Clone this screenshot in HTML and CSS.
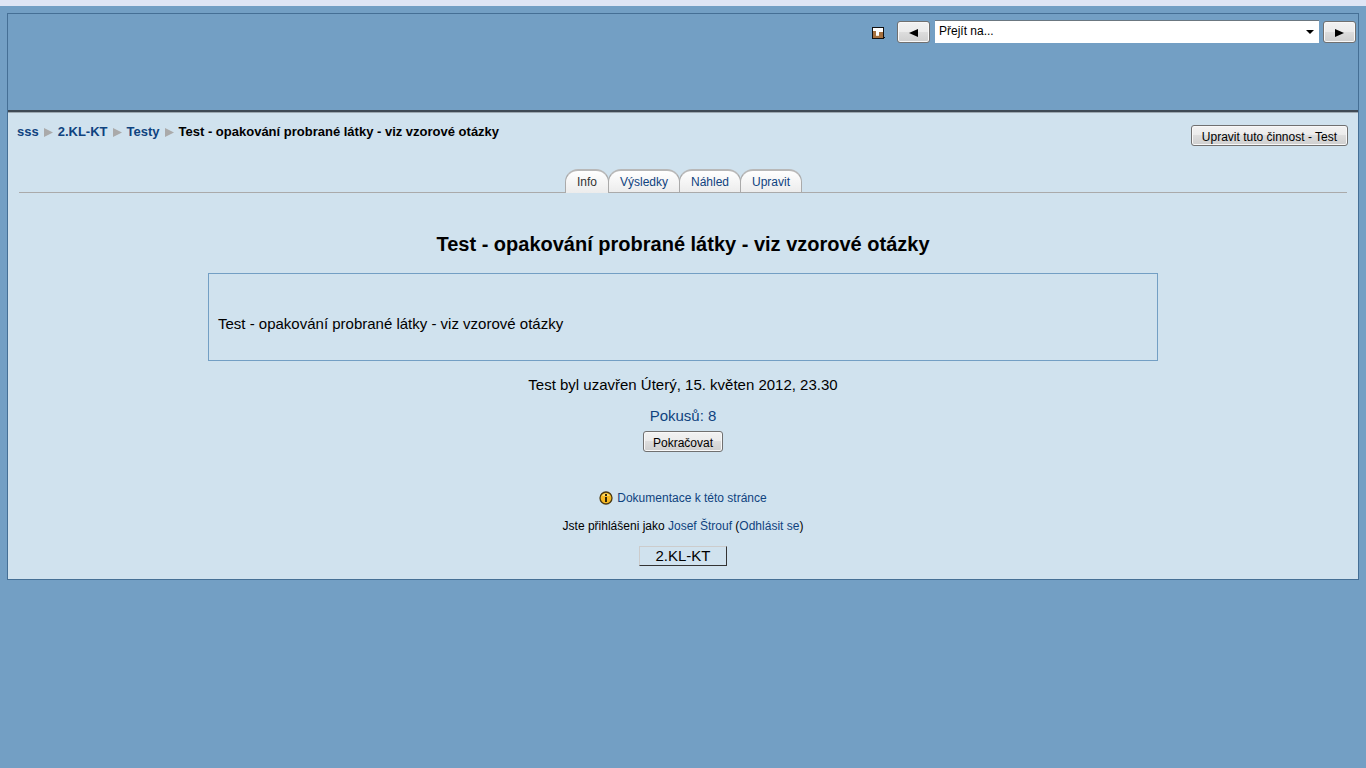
FILE: index.html
```html
<!DOCTYPE html>
<html lang="cs">
<head>
<meta charset="utf-8">
<title>Test - opakování probrané látky</title>
<link rel="stylesheet" href="styles.css">
</head>
<body>
<div class="page">
  <header class="header">
    <form class="jump">
      <a class="log-link" href="#" aria-label="Protokoly">
        <svg width="13" height="13" viewBox="0 0 13 13" shape-rendering="crispEdges">
          <path fill="#111" d="M0 0h12v12H0z"/>
          <path fill="#fff" d="M1 1h10v10H1z"/>
          <path fill="#a5703f" d="M1 4h3v7H1zM4 8h3v3H4zM7 5h4v6H7z"/>
          <path fill="#f3e6d2" d="M4 8h3v1H4z"/>
          <path fill="#111" d="M11 10h2v1h-1v1h-1z"/>
        </svg>
      </a>
      <button class="btn btn-arrow btn-prev" type="button" aria-label="Předchozí">
        <svg width="9" height="8" viewBox="0 0 9 8"><path d="M9 0v8L0 4z"/></svg>
      </button>
      <span class="select-wrap">
        <select class="select" aria-label="Přejít na"><option>Přejít na...</option></select>
        <svg class="caret" width="8" height="4" viewBox="0 0 8 4"><path d="M0 0h8L4 4z"/></svg>
      </span>
      <button class="btn btn-arrow" type="button" aria-label="Další">
        <svg width="9" height="8" viewBox="0 0 9 8"><path d="M0 0v8l9-4z"/></svg>
      </button>
    </form>
  </header>
  <div class="navbar">
    <nav class="crumbs">
      <a href="#">sss</a><svg class="sep" width="9" height="9" viewBox="0 0 9 9"><path d="M0 0v9l9-4.500z"/></svg>
      <a href="#">2.KL-KT</a><svg class="sep" width="9" height="9" viewBox="0 0 9 9"><path d="M0 0v9l9-4.500z"/></svg>
      <a href="#">Testy</a><svg class="sep" width="9" height="9" viewBox="0 0 9 9"><path d="M0 0v9l9-4.500z"/></svg>
      <span>Test - opakování probrané látky - viz vzorové otázky</span>
    </nav>
    <button class="btn btn-edit" type="button">Upravit tuto činnost - Test</button>
  </div>
  <nav class="tabs">
    <a class="tab tab-active" href="#">Info</a>
    <a class="tab" href="#">Výsledky</a>
    <a class="tab" href="#">Náhled</a>
    <a class="tab" href="#">Upravit</a>
  </nav>
  <main class="content">
    <h1 class="title">Test - opakování probrané látky - viz vzorové otázky</h1>
    <div class="intro">Test - opakování probrané látky - viz vzorové otázky</div>
    <p class="closed">Test byl uzavřen Úterý, 15. květen 2012, 23.30</p>
    <a class="attempts" href="#">Pokusů: 8</a>
    <button class="btn" type="button">Pokračovat</button>
  </main>
  <footer class="footer">
    <a class="docs" href="#">
      <svg width="14" height="14" viewBox="0 0 14 14">
        <circle cx="7" cy="7" r="6" fill="#f6b924" stroke="#493812" stroke-width="1.300"/>
        <path fill="#fbdc72" d="M3 5a4.500 4.500 0 0 1 8 0z"/>
        <path fill="#33270a" d="M6 3h2v2H6zM6 6h2v5H6z"/>
      </svg>
      Dokumentace k této stránce
    </a>
    <p class="login">Jste přihlášeni jako <a href="#">Josef Štrouf</a> (<a href="#">Odhlásit se</a>)</p>
    <a class="home" href="#">2.KL-KT</a>
  </footer>
</div>
</body>
</html>
```
FILE: styles.css
```css
* {
  box-sizing: border-box;
}

body {
  margin: 0;
  padding: 7px;
  border-top: 6px solid #dfe5f4;
  background: #739fc4;
  font: 15px/18px "Liberation Sans", Arial, sans-serif;
  color: #000;
}

a {
  color: #0f437f;
  text-decoration: none;
}

.page {
  border: 1px solid #456f95;
  background: #d0e2ee;
}

.header {
  min-height: 98px;
  padding: 6px 2px;
  border-bottom: 2px solid #3f4a55;
  background: #739fc4;
  box-shadow: 0 1px 0 #9ca8b1;
}

.jump {
  display: flex;
  justify-content: flex-end;
  align-items: center;
  gap: 4px;
}

.log-link {
  display: flex;
  margin-right: 8px;
  padding-top: 3px;
}

.btn {
  height: 21px;
  padding: 2px 9px 0;
  border: 1px solid #707070;
  border-radius: 3px;
  background: linear-gradient(#f2f2f2 0%, #ebebeb 50%, #dddddd 50%, #cfcfcf 100%);
  box-shadow: inset 0 0 0 1px #f8f8f8;
  font: 12px/16px "Liberation Sans", Arial, sans-serif;
  color: #000;
}

.btn-arrow {
  display: flex;
  align-items: center;
  justify-content: center;
  width: 33px;
  height: 22px;
}

.btn-prev {
  margin-right: 1px;
}

.btn-edit {
  padding-right: 10px;
  padding-left: 10px;
}

.select-wrap {
  position: relative;
  width: 384px;
}

.select {
  display: block;
  width: 100%;
  height: 23px;
  padding: 0 4px 2px;
  appearance: none;
  border: 0;
  border-top: 1px solid #6b7780;
  border-radius: 0;
  background: #fff;
  font: 12px/16px "Liberation Sans", Arial, sans-serif;
  color: #000;
}

.caret {
  position: absolute;
  top: 10px;
  right: 5px;
  pointer-events: none;
}

.navbar {
  display: flex;
  justify-content: space-between;
  align-items: flex-start;
  padding: 13px 10px 0 9px;
}

.crumbs {
  display: flex;
  align-items: center;
  gap: 5px;
  font-size: 13px;
  line-height: 14px;
  font-weight: bold;
}

.sep {
  fill: #aaa;
}

.tabs {
  display: flex;
  justify-content: center;
  margin: 23px 11px 0;
  border-bottom: 1px solid #aaa;
}

.tab {
  height: 23px;
  margin-right: -1px;
  padding: 4px 11px 0;
  border: 1px solid #aaa;
  border-top-width: 2px;
  border-top-color: #b8b8b8;
  border-bottom: 0;
  border-radius: 13px 13px 0 0;
  background: linear-gradient(#fff, #ececec);
  font-size: 12px;
  line-height: 14px;
}

.tab-active {
  height: 24px;
  margin-bottom: -1px;
  color: #333;
}

.content {
  display: flex;
  flex-direction: column;
  align-items: center;
}

.title {
  margin: 39px 0 17px;
  font-size: 20px;
  line-height: 24px;
}

.intro {
  width: calc(100% - 400px);
  padding: 41px 9px 27px;
  border: 1px solid #739fc4;
}

.closed {
  margin: 15px 0 13px;
}

.attempts {
  margin-bottom: 6px;
}

.footer {
  display: flex;
  flex-direction: column;
  align-items: center;
  padding: 38px 0 13px;
  font-size: 12px;
  line-height: 16px;
}

.docs {
  display: flex;
  align-items: center;
  gap: 4px;
}

.login {
  margin: 12px 0;
}

.home {
  padding: 0 15px;
  border: 1px solid;
  border-color: #ccc #333 #333 #ccc;
  font-size: 15px;
  line-height: 18px;
  color: #000;
}
```
